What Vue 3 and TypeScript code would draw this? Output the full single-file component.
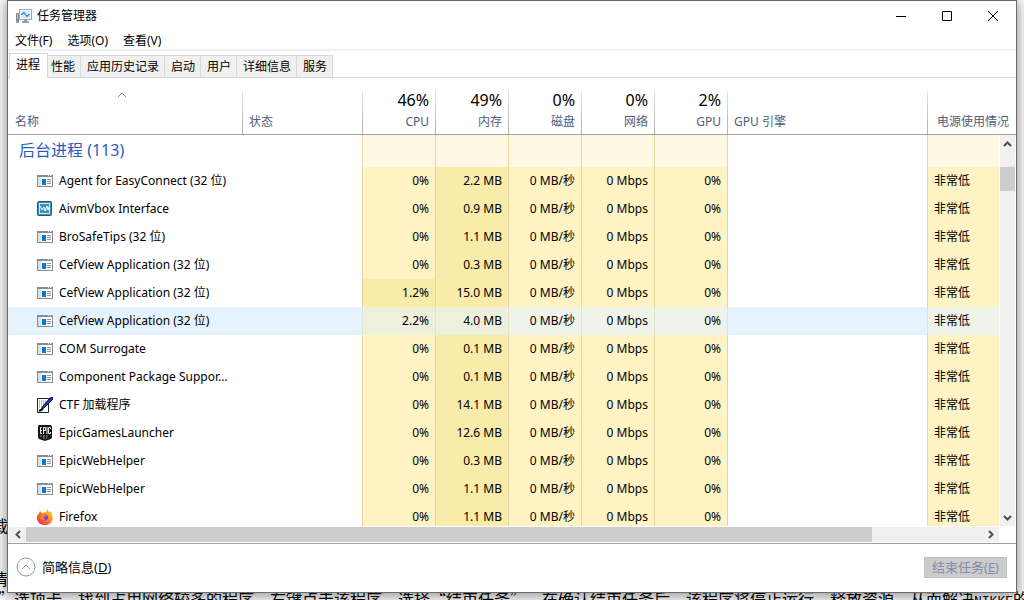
<script setup lang="ts">
import { ref } from 'vue'

type IconKind = 'app' | 'vbox' | 'ctf' | 'epic' | 'firefox'

interface Process {
  name: string
  icon: IconKind
  cpu: string
  memory: string
  busy?: boolean
}

const menus = ['文件(F)', '选项(O)', '查看(V)']
const tabs = ['进程', '性能', '应用历史记录', '启动', '用户', '详细信息', '服务']
const activeTab = ref('进程')
const selected = ref(5)

const usage = [
  { value: '46%', label: 'CPU' },
  { value: '49%', label: '内存' },
  { value: '0%', label: '磁盘' },
  { value: '0%', label: '网络' },
  { value: '2%', label: 'GPU' },
]

const processes: Process[] = [
  { name: 'Agent for EasyConnect (32 位)', icon: 'app', cpu: '0%', memory: '2.2 MB' },
  { name: 'AivmVbox Interface', icon: 'vbox', cpu: '0%', memory: '0.9 MB' },
  { name: 'BroSafeTips (32 位)', icon: 'app', cpu: '0%', memory: '1.1 MB' },
  { name: 'CefView Application (32 位)', icon: 'app', cpu: '0%', memory: '0.3 MB' },
  { name: 'CefView Application (32 位)', icon: 'app', cpu: '1.2%', memory: '15.0 MB', busy: true },
  { name: 'CefView Application (32 位)', icon: 'app', cpu: '2.2%', memory: '4.0 MB', busy: true },
  { name: 'COM Surrogate', icon: 'app', cpu: '0%', memory: '0.1 MB' },
  { name: 'Component Package Suppor...', icon: 'app', cpu: '0%', memory: '0.1 MB' },
  { name: 'CTF 加载程序', icon: 'ctf', cpu: '0%', memory: '14.1 MB' },
  { name: 'EpicGamesLauncher', icon: 'epic', cpu: '0%', memory: '12.6 MB' },
  { name: 'EpicWebHelper', icon: 'app', cpu: '0%', memory: '0.3 MB' },
  { name: 'EpicWebHelper', icon: 'app', cpu: '0%', memory: '1.1 MB' },
  { name: 'Firefox', icon: 'firefox', cpu: '0%', memory: '1.1 MB' },
]
</script>

<template>
  <div class="desktop" lang="zh-CN">
    <div class="page-text" aria-hidden="true">
      <p class="edge first">载</p>
      <p class="edge second">清</p>
      <p class="line">”选项卡，找到占用网络较多的程序，右键点击该程序，选择“结束任务”，在确认结束任务后，该程序将停止运行，释放资源，从而解决<span class="mono">NIKKE</span>的</p>
    </div>

    <main class="window">
      <header class="titlebar">
        <svg class="logo" width="16" height="16" viewBox="0 0 16 16" aria-hidden="true">
          <path d="M0.500 5.500h2v9h-2z" fill="#b9bcbe" stroke="#8a8d90" />
          <path d="M1 11h1v2h-1z" fill="#4fae55" />
          <rect x="3.500" y="1.500" width="12" height="10" fill="#f4fafd" stroke="#a4a8ab" />
          <rect x="5" y="3" width="9" height="7" fill="#d5effb" />
          <path d="M5 6.500h1l2-2 3 4 2-2h1" fill="none" stroke="#2c8fc9" stroke-width="1.200" />
          <path d="M8 12h3v1h2v2H6v-2h2z" fill="#9b9fa2" />
        </svg>
        <h1>任务管理器</h1>
        <div class="controls">
          <button type="button" aria-label="最小化">
            <svg width="12" height="12" viewBox="0 0 12 12"><path d="M1 6.500h10" /></svg>
          </button>
          <button type="button" aria-label="最大化">
            <svg width="12" height="12" viewBox="0 0 12 12"><path d="M1.500 1.500h9v9h-9z" /></svg>
          </button>
          <button type="button" aria-label="关闭">
            <svg width="12" height="12" viewBox="0 0 12 12"><path d="M1 1l10 10M11 1L1 11" /></svg>
          </button>
        </div>
      </header>

      <nav class="menubar">
        <button v-for="menu in menus" :key="menu" type="button">{{ menu }}</button>
      </nav>

      <div class="tabs" role="tablist">
        <button
          v-for="tab in tabs"
          :key="tab"
          type="button"
          role="tab"
          :aria-selected="tab === activeTab"
          :class="{ active: tab === activeTab }"
          @click="activeTab = tab"
        >{{ tab }}</button>
      </div>

      <section class="view">
        <table>
          <colgroup>
            <col class="c-name" />
            <col class="c-status" />
            <col v-for="item in usage" :key="item.label" class="c-usage" />
            <col />
            <col class="c-power" />
          </colgroup>
          <thead>
            <tr>
              <th class="left first-col">
                <svg class="sort" width="10" height="6" viewBox="0 0 10 6" aria-hidden="true"><path d="M1 5l4-4 4 4" /></svg>
                名称
              </th>
              <th class="left">状态</th>
              <th v-for="item in usage" :key="item.label">
                <strong>{{ item.value }}</strong>{{ item.label }}
              </th>
              <th class="left">GPU 引擎</th>
              <th>电源使用情况</th>
            </tr>
          </thead>
          <tbody>
            <tr class="group">
              <td colspan="2">后台进程 (113)</td>
              <td v-for="item in usage" :key="item.label" class="heat"></td>
              <td class="engine"></td>
              <td class="heat"></td>
            </tr>
            <tr
              v-for="(process, index) in processes"
              :key="index"
              :class="{ selected: index === selected }"
              @click="selected = index"
            >
              <td colspan="2">
                <div class="name">
                  <svg v-if="process.icon === 'app'" width="16" height="16" viewBox="0 0 16 16" aria-hidden="true">
                    <path d="M0 2h16v12H0z" fill="#878c91" />
                    <path d="M1 4h14v9H1z" fill="#fff" />
                    <path d="M1 4h3v9H1z" fill="#e1e1e1" />
                    <path d="M5 6h4v6H5z" fill="#0078d7" />
                    <path d="M10 6h4v1h-4zM10 8h4v1h-4zM10 10h4v1h-4z" fill="#92979b" />
                    <path d="M11 2h1v1h-1zM13 2h1v1h-1z" fill="#e3e5e6" />
                  </svg>
                  <svg v-else-if="process.icon === 'vbox'" width="16" height="16" viewBox="0 0 16 16" aria-hidden="true">
                    <rect x="0.500" y="0.500" width="14" height="14" rx="1" fill="#398fb8" stroke="#28566e" />
                    <rect x="2.500" y="2.500" width="10" height="10" fill="#3f92b9" stroke="#d4ebf4" />
                    <path d="M3 5l2 4 2-3 1 4 2-5 1 4 1-3" fill="none" stroke="#fff" />
                  </svg>
                  <svg v-else-if="process.icon === 'ctf'" width="16" height="16" viewBox="0 0 16 16" aria-hidden="true">
                    <path d="M0.500 1.500h11v14H0.500z" fill="#fff" stroke="#222" />
                    <path d="M2 4h8M2 6h7M2 8h5M2 10h3" stroke="#777" stroke-dasharray="1 1" />
                    <path d="M4 13l2-4 7-8 3-1v2l-8 8z" fill="#173dc5" stroke="#050830" />
                    <path d="M2 14l2-1 2-1" stroke="#111" stroke-width="2" />
                  </svg>
                  <svg v-else-if="process.icon === 'epic'" width="16" height="16" viewBox="0 0 16 16" aria-hidden="true">
                    <path d="M2 0h11q2 0 2 2v10q0 1-1 2l-6 2-6-2q-1-1-1-2V2q0-2 1-2z" fill="#161616" />
                    <path d="M5 2.500H3.500v6H5M3.500 5.500H5M6.500 9V2.500h2v3h-2M10 2v7M13.500 4V2.500h-2v6h2V7" fill="none" stroke="#eee" />
                    <path d="M3 11h9M6 13h4" stroke="#999" stroke-dasharray="2 1" />
                  </svg>
                  <svg v-else width="16" height="16" viewBox="0 0 16 16" aria-hidden="true">
                    <defs>
                      <linearGradient id="flame" x1="1" y1="0" x2="0" y2="1">
                        <stop offset="0" stop-color="#ffe33c" />
                        <stop offset="0.450" stop-color="#ff8a22" />
                        <stop offset="1" stop-color="#f5156c" />
                      </linearGradient>
                    </defs>
                    <path d="M3 2l2 2 4-1 1-3 2 3 1-1c5 6 3 14-5 14C0 16-2 8 2 4z" fill="url(#flame)" />
                    <circle cx="8" cy="8.500" r="3" fill="#7744cf" />
                    <path d="M3 6q3-2 5 0l2 1-3 1q-1 2 2 3-4 1-6-2z" fill="#ff7a25" />
                  </svg>
                  <span>{{ process.name }}</span>
                </div>
              </td>
              <td class="heat" :class="{ warm: process.busy }">{{ process.cpu }}</td>
              <td class="heat warm">{{ process.memory }}</td>
              <td class="heat">0 MB/秒</td>
              <td class="heat">0 Mbps</td>
              <td class="heat">0%</td>
              <td class="engine"></td>
              <td class="heat power">非常低</td>
            </tr>
          </tbody>
        </table>

        <div class="vscroll">
          <button type="button" aria-label="向上滚动">
            <svg width="9" height="6" viewBox="0 0 9 6"><path d="M1 5l3.500-3.500L8 5" /></svg>
          </button>
          <div class="thumb"></div>
          <button type="button" aria-label="向下滚动">
            <svg width="9" height="6" viewBox="0 0 9 6"><path d="M1 1l3.500 3.500L8 1" /></svg>
          </button>
        </div>
      </section>

      <div class="hscroll">
        <button type="button" aria-label="向左滚动">
          <svg width="6" height="9" viewBox="0 0 6 9"><path d="M5 1L1.500 4.500 5 8" /></svg>
        </button>
        <div class="track"><div class="thumb"></div></div>
        <button type="button" aria-label="向右滚动">
          <svg width="6" height="9" viewBox="0 0 6 9"><path d="M1 1l3.500 3.500L1 8" /></svg>
        </button>
      </div>

      <footer>
        <button type="button" class="fewer">
          <svg width="20" height="20" viewBox="0 0 20 20" aria-hidden="true">
            <circle cx="10" cy="10" r="9" />
            <path d="M6 12l4-4 4 4" />
          </svg>
          <span>简略信息(<u>D</u>)</span>
        </button>
        <button type="button" class="end" disabled>结束任务(<u>E</u>)</button>
      </footer>
    </main>
  </div>
</template>

<style>
body {
  margin: 0;
  overflow: hidden;
}
</style>

<style scoped>
.desktop {
  position: relative;
  box-sizing: border-box;
  height: 100vh;
  padding: 0 7px 7px;
  overflow: hidden;
  background: #fff;
  color: #000;
  font: 12px/16px "Noto Sans", "Noto Sans CJK SC", sans-serif;
}

.page-text {
  position: absolute;
  inset: 0;
  overflow: hidden;
  font: 16px/20px "Noto Sans CJK SC", sans-serif;
  text-spacing-trim: space-all;
  white-space: nowrap;
}

.page-text p {
  position: absolute;
  margin: 0;
}

.page-text .edge {
  left: -8px;
}

.page-text .first {
  top: 515px;
}

.page-text .second {
  top: 568px;
}

.page-text .line {
  left: -2px;
  bottom: -12px;
}

.mono {
  font: 13px/20px "Liberation Mono", monospace;
}

.window {
  position: relative;
  box-sizing: border-box;
  display: flex;
  flex-direction: column;
  height: 100%;
  border: 1px solid #6b6b6b;
  background: #fff;
  box-shadow: 0 2px 12px 2px rgba(0, 0, 0, 0.4);
}

button {
  margin: 0;
  padding: 0;
  border: 0;
  background: none;
  color: inherit;
  font: inherit;
}

svg {
  display: block;
  flex: none;
}

.titlebar {
  display: flex;
  align-items: center;
  height: 30px;
  padding-left: 8px;
}

h1 {
  margin: 0 0 0 5px;
  font-size: 12px;
  font-weight: 400;
}

.controls {
  display: flex;
  margin-left: auto;
}

.controls button {
  display: grid;
  place-items: center;
  width: 46px;
  height: 30px;
}

.controls path {
  fill: none;
  stroke: #000;
}

.menubar {
  display: flex;
  gap: 15px;
  height: 16px;
  padding: 2px 0 0 7px;
  border-bottom: 2px solid #f0f0f0;
}

.tabs {
  display: flex;
  align-items: flex-end;
  height: 25px;
  padding: 2px 0 0 1px;
  background: linear-gradient(#d9d9d9, #d9d9d9) bottom / 100% 1px no-repeat;
}

.tabs button {
  height: 23px;
  padding: 0 5px 0 6px;
  border: 1px solid #d9d9d9;
  border-left: 0;
  background: #f0f0f0;
}

.tabs .active {
  z-index: 1;
  height: 25px;
  margin-right: -3px;
  padding: 0 7px 2px 6px;
  border-left: 1px solid #d9d9d9;
  border-bottom: 0;
  background: #fff;
}

.view {
  position: relative;
  flex: 1;
  min-height: 0;
  overflow: hidden;
}

table {
  width: 100%;
  table-layout: fixed;
  border-spacing: 0;
}

.c-name {
  width: 234px;
}

.c-status {
  width: 120px;
}

.c-usage {
  width: 73px;
}

.c-power {
  width: 89px;
}

th {
  position: relative;
  box-sizing: border-box;
  height: 57px;
  padding: 0 6px 4px 7px;
  border-bottom: 1px solid #a0a0a0;
  background: linear-gradient(#e5e5e5, #b0b0b0) 0 100% / 1px 43px no-repeat;
  color: #4c607a;
  font-weight: 400;
  text-align: right;
  vertical-align: bottom;
  white-space: nowrap;
}

th.left {
  text-align: left;
}

th.first-col {
  background: none;
}

th:last-child {
  padding-right: 7px;
}

th strong {
  display: block;
  margin-bottom: 4px;
  color: #000;
  font-size: 16px;
  font-weight: 400;
  line-height: 20px;
}

.sort {
  position: absolute;
  top: 14px;
  left: 50%;
  margin-left: -8px;
  fill: none;
  stroke: #8090a8;
}

td {
  box-sizing: border-box;
  height: 28px;
  padding: 0;
  white-space: nowrap;
}

.group td {
  height: 32px;
  padding: 0 0 2px 11px;
  color: #2a5cc5;
  font-size: 16px;
}

.heat {
  padding-right: 6px;
  border-left: 1px solid #e9d5a0;
  background: #fff3c4;
  text-align: right;
}

.heat.warm {
  background: #f9ebaa;
}

.group .heat {
  background: #fff8e3;
}

.engine {
  border-left: 1px solid #e9d5a0;
}

.heat.power {
  padding-left: 6px;
  text-align: left;
}

.selected td {
  border-color: #e2e3cb;
  background: #e5f3ff;
}

.selected .heat {
  background: #eff3ea;
}

.selected .heat.warm {
  background: #ecf0dc;
}

.name {
  display: flex;
  align-items: center;
  gap: 6px;
  padding-left: 29px;
}

.vscroll {
  position: absolute;
  top: 57px;
  right: 0;
  bottom: 0;
  display: flex;
  flex-direction: column;
  width: 15px;
  border: solid #fff;
  border-width: 0 1px;
  background: #f0f0f0;
}

.vscroll button {
  display: grid;
  place-items: center;
  height: 17px;
}

.vscroll .thumb {
  height: 24px;
  margin: 15px 0 auto;
  background: #cdcdcd;
}

.vscroll path,
.hscroll path {
  fill: none;
  stroke: #505050;
  stroke-width: 2;
}

.hscroll {
  display: flex;
  height: 15px;
  margin: 1px 17px 1px 1px;
  background: #f0f0f0;
}

.hscroll button {
  display: grid;
  place-items: center;
  width: 17px;
}

.track {
  flex: 1;
}

.track .thumb {
  width: 88.5%;
  height: 15px;
  background: #cdcdcd;
}

footer {
  box-sizing: border-box;
  display: flex;
  align-items: center;
  justify-content: space-between;
  height: 49px;
  padding: 0 9px 2px 8px;
  border-top: 1px solid #a0a0a0;
}

.fewer {
  display: flex;
  align-items: center;
  gap: 6px;
  font-size: 13px;
}

.fewer svg {
  fill: none;
  stroke: #999;
}

.end {
  width: 83px;
  height: 21px;
  border: 1px solid #bfbfbf;
  background: #ccc;
  color: #838ba5;
  font-size: 13px;
  line-height: 18px;
}
</style>
